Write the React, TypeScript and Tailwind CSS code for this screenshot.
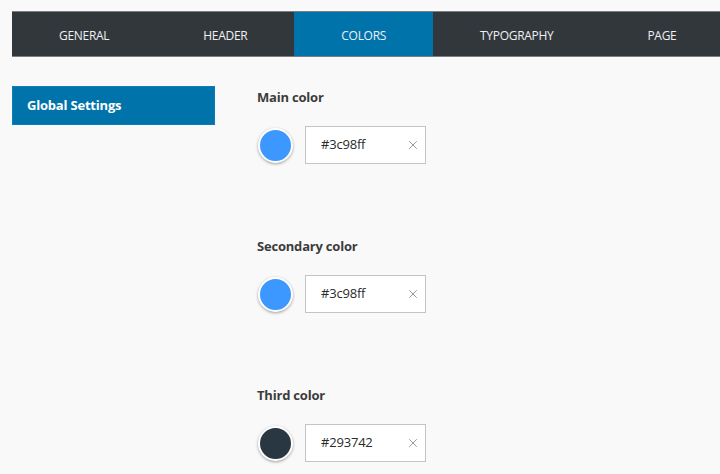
import { X } from "lucide-react";

const tabs = ["GENERAL", "HEADER", "COLORS", "TYPOGRAPHY", "PAGE"];

const colors = [
  { label: "Main color", value: "#3c98ff", swatch: "bg-[#3c98ff]" },
  { label: "Secondary color", value: "#3c98ff", swatch: "bg-[#3c98ff]" },
  { label: "Third color", value: "#293742", swatch: "bg-[#293742]" },
];

export default function App() {
  return (
    <div className="h-[474px] w-[720px] overflow-hidden bg-[#f9f9f9] font-['Open_Sans',sans-serif]">
      <div className="pl-3 pt-[11px]">
        <nav className="flex h-[46px] w-[760px] border-y border-[#7b7f84] bg-[#32373c]">
          {tabs.map((tab) => (
            <div
              key={tab}
              className={`flex items-center px-[47px] pt-[3px] text-[12px] tracking-[-0.3px] text-[#eef0f2] ${
                tab === "COLORS" ? "bg-[#0073aa]" : ""
              }`}
            >
              {tab}
            </div>
          ))}
        </nav>
      </div>

      <div className="flex pl-3 pt-[29px]">
        <aside className="w-[203px] shrink-0">
          <div className="flex h-[39px] items-center border border-[#0a7fb5] bg-[#0073aa] pl-[14px] text-[13px] font-bold tracking-[-0.2px] text-white">
            Global Settings
          </div>
        </aside>

        <main className="ml-[42px] flex flex-col gap-[73px] pt-[2px]">
          {colors.map((c) => (
            <section key={c.label}>
              <h3 className="text-[13px] font-bold leading-[18px] tracking-[-0.2px] text-[#3c3c3c]">
                {c.label}
              </h3>
              <div className="mt-[20px] flex items-center">
                <span
                  className={`ml-px h-[35px] w-[35px] rounded-full border-2 border-white shadow-[0_1px_3px_rgba(0,0,0,0.35)] ${c.swatch}`}
                />
                <div className="ml-[12px] flex h-[38px] w-[121px] items-center justify-between border border-[#c4c4c4] bg-white pl-[15px] pr-[5px]">
                  <span className="text-[13px] tracking-[-0.2px] text-[#2a2a2a]">{c.value}</span>
                  <X size={14} strokeWidth={1.5} className="text-[#8a8a8a]" />
                </div>
              </div>
            </section>
          ))}
        </main>
      </div>
    </div>
  );
}
